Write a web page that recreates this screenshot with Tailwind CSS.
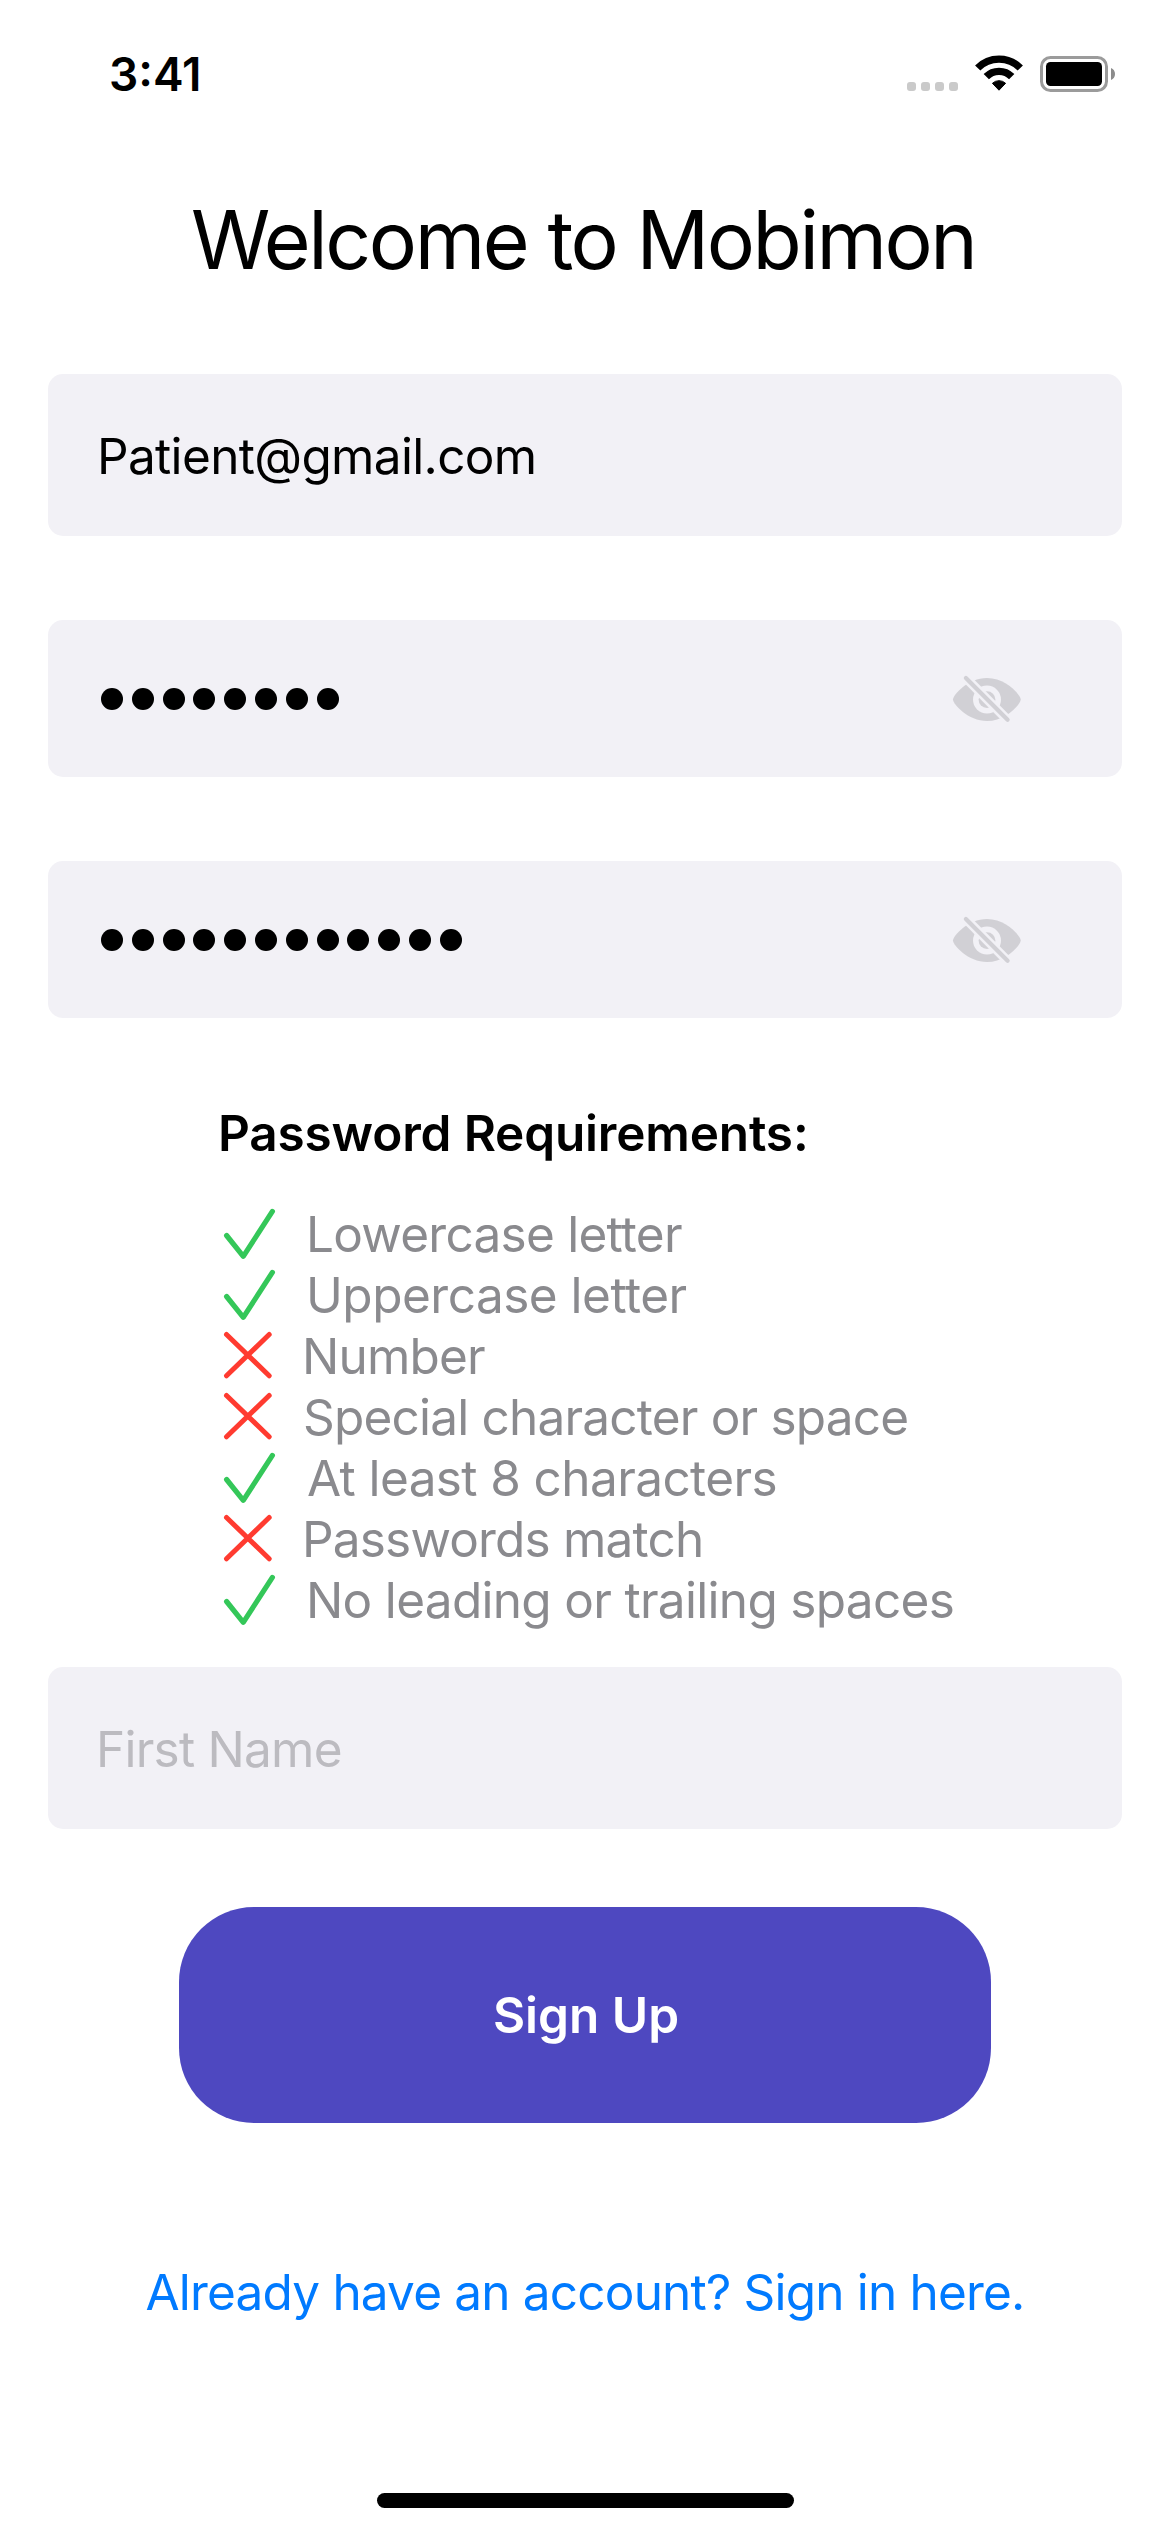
<!DOCTYPE html>
<html lang="en">
<head>
<meta charset="utf-8">
<title>Mobimon – Sign Up</title>
<script src="https://cdn.jsdelivr.net/npm/@tailwindcss/browser@4"></script>
</head>
<body class="bg-white">
<svg class="hidden">
  <symbol id="check" viewBox="0 0 56 61">
    <path d="M5.6 32.5 L22.3 53.3 L51.4 8.4" fill="none" stroke="#34c759" stroke-width="5.2" stroke-linecap="round" stroke-linejoin="round"/>
  </symbol>
  <symbol id="cross" viewBox="0 0 56 61">
    <path d="M5.5 9.5 L48.2 50.8 M48.2 9.5 L5.5 50.8" fill="none" stroke="#ff3b30" stroke-width="5" stroke-linecap="round"/>
  </symbol>
  <symbol id="eye-off" viewBox="0 0 74 52">
    <path d="M3 26.5C3 22 18 5 37 5S70.7 22 70.7 26.5S56 48 37 48S3 31 3 26.5Z" fill="#d1d0d5"/>
    <circle cx="37" cy="26.6" r="14" fill="#f2f1f6"/>
    <circle cx="37" cy="26.6" r="8.4" fill="#d1d0d5"/>
    <path d="M11.7 .7L61.7 51" stroke="#f2f1f6" stroke-width="9.4"/>
    <path d="M15.900 5L57.600 46.800" stroke="#d1d0d5" stroke-width="4.2" stroke-linecap="round"/>
  </symbol>
</svg>
<main class="flex h-[2532px] w-[1170px] flex-col overflow-hidden bg-white font-['Inter',sans-serif] text-[49.5px] text-black">
  <header class="flex h-[190px] items-start justify-between pt-[46px] pr-[53px] pl-[109px]">
    <span class="text-[46px] leading-[56px] font-semibold">3:41</span>
    <svg class="mt-2 h-10 w-[210px]" viewBox="0 0 210 40">
      <g fill="#cacaca">
        <rect x="0" y="28" width="9" height="9" rx="3"/>
        <rect x="14" y="28" width="9" height="9" rx="3"/>
        <rect x="28" y="28" width="9" height="9" rx="3"/>
        <rect x="42" y="28" width="9" height="9" rx="3"/>
      </g>
      <path d="M70.7 14A30.1 30.1 0 0 1 113.3 14M79.3 22.7A17.7 17.7 0 0 1 104.7 22.7" fill="none" stroke="#000" stroke-width="7.4"/>
      <path d="M85.4 29.3A9.6 9.6 0 0 1 98.6 29.3L92 36.2Z" stroke="#000" stroke-linejoin="round"/>
      <rect x="134.5" y="3.5" width="65" height="33" rx="9" fill="none" stroke="#9b9b9b" stroke-width="3"/>
      <rect x="139" y="8" width="56" height="24" rx="4.5"/>
      <path d="M204 14C206.500 15 208 17.200 208 20S206.500 25 204 26Z" fill="#8c8c8c"/>
    </svg>
  </header>

  <h1 class="pl-[191px] text-[80.5px] leading-[100px] tracking-[-2.45px] whitespace-nowrap">Welcome to Mobimon</h1>

  <div class="mx-12 mt-[84px] flex h-[162px] items-center rounded-[15px] bg-[#f2f1f6] pt-[2px] pl-[49px] tracking-[-0.66px]">Patient@gmail.com</div>

  <div class="mx-12 mt-[84px] flex h-[157px] items-center justify-between rounded-[15px] bg-[#f2f1f6] pr-[98px] pl-[53px]">
    <div class="flex gap-[8.8px] pt-px">
      <i class="size-[22px] rounded-full bg-black"></i><i class="size-[22px] rounded-full bg-black"></i><i class="size-[22px] rounded-full bg-black"></i><i class="size-[22px] rounded-full bg-black"></i><i class="size-[22px] rounded-full bg-black"></i><i class="size-[22px] rounded-full bg-black"></i><i class="size-[22px] rounded-full bg-black"></i><i class="size-[22px] rounded-full bg-black"></i>
    </div>
    <svg class="h-[52px] w-[74px]"><use href="#eye-off"/></svg>
  </div>

  <div class="mx-12 mt-[84px] flex h-[157px] items-center justify-between rounded-[15px] bg-[#f2f1f6] pr-[98px] pl-[53px]">
    <div class="flex gap-[8.8px] pt-px">
      <i class="size-[22px] rounded-full bg-black"></i><i class="size-[22px] rounded-full bg-black"></i><i class="size-[22px] rounded-full bg-black"></i><i class="size-[22px] rounded-full bg-black"></i><i class="size-[22px] rounded-full bg-black"></i><i class="size-[22px] rounded-full bg-black"></i><i class="size-[22px] rounded-full bg-black"></i><i class="size-[22px] rounded-full bg-black"></i><i class="size-[22px] rounded-full bg-black"></i><i class="size-[22px] rounded-full bg-black"></i><i class="size-[22px] rounded-full bg-black"></i><i class="size-[22px] rounded-full bg-black"></i>
    </div>
    <svg class="h-[52px] w-[74px]"><use href="#eye-off"/></svg>
  </div>

  <h2 class="mt-[85px] pl-[218px] leading-[60px] font-semibold tracking-[-0.17px]">Password Requirements:</h2>

  <ul class="mt-10 pl-[221px] leading-[63px] whitespace-nowrap text-[#8a8a8e]">
    <li class="flex h-[61px]"><svg class="h-[61px] w-[56px]"><use href="#check"/></svg><span class="ml-[29px] tracking-[-0.73px]">Lowercase letter</span></li>
    <li class="flex h-[61px]"><svg class="h-[61px] w-[56px]"><use href="#check"/></svg><span class="ml-[29px] tracking-[-0.5px]">Uppercase letter</span></li>
    <li class="flex h-[61px]"><svg class="h-[61px] w-[56px]"><use href="#cross"/></svg><span class="ml-[25px] tracking-[-0.82px]">Number</span></li>
    <li class="flex h-[61px]"><svg class="h-[61px] w-[56px]"><use href="#cross"/></svg><span class="ml-[26px] tracking-[-0.8px]">Special character or space</span></li>
    <li class="flex h-[61px]"><svg class="h-[61px] w-[56px]"><use href="#check"/></svg><span class="ml-[30px] tracking-[-0.6px]">At least 8 characters</span></li>
    <li class="flex h-[61px]"><svg class="h-[61px] w-[56px]"><use href="#cross"/></svg><span class="ml-[25px] tracking-[-0.81px]">Passwords match</span></li>
    <li class="flex h-[61px]"><svg class="h-[61px] w-[56px]"><use href="#check"/></svg><span class="ml-[29px] tracking-[-0.69px]">No leading or trailing spaces</span></li>
  </ul>

  <div class="mx-12 mt-[37px] flex h-[162px] items-center rounded-[15px] bg-[#f2f1f6] pt-[2px] pl-[48px] tracking-[-0.76px] text-[#bcbbc0]">First Name</div>

  <button class="mt-[78px] ml-[179px] h-[216px] w-[812px] rounded-[75px] bg-[#4e48c0] pl-[2px] text-center font-semibold text-white">Sign Up</button>

  <a class="mt-[139px] text-center leading-[60px] tracking-[-0.81px] text-[#007aff]">Already have an account? Sign in here.</a>

  <div class="mt-[171px] ml-[377px] h-[15px] w-[417px] rounded-full bg-black"></div>
</main>
</body>
</html>
